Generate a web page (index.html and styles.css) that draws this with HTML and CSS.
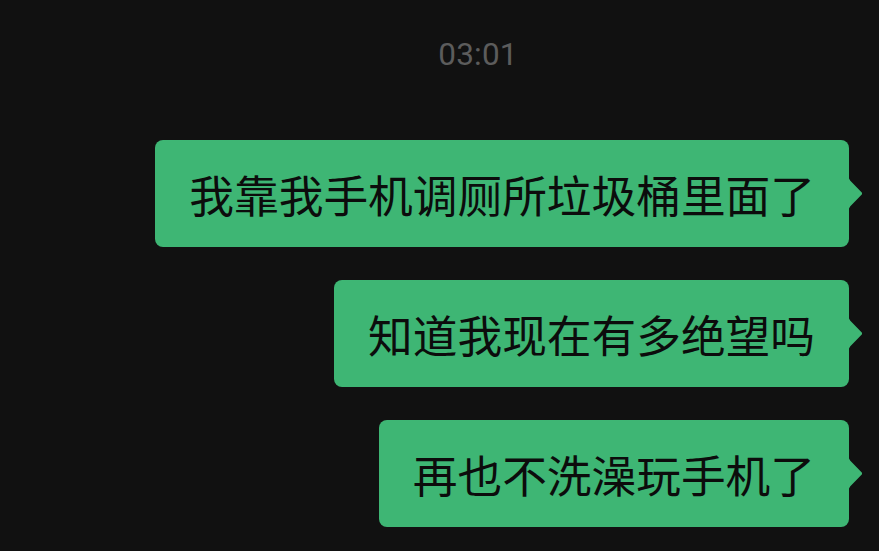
FILE: index.html
```html
<!DOCTYPE html>
<html lang="zh-CN">
<head>
<meta charset="utf-8">
<title>聊天</title>
<link rel="stylesheet" href="styles.css">
</head>
<body>
<main class="chat">
  <div class="time">03:01</div>
  <div class="messages">
    <div class="bubble">我靠我手机调厕所垃圾桶里面了</div>
    <div class="bubble">知道我现在有多绝望吗</div>
    <div class="bubble">再也不洗澡玩手机了</div>
  </div>
</main>
</body>
</html>
```
FILE: styles.css
```css
html, body {
  margin: 0;
  padding: 0;
  background: #111111;
  height: 100%;
  overflow: hidden;
}

.chat {
  display: flex;
  flex-direction: column;
  padding-top: 36px;
}

.time {
  align-self: center;
  margin-left: 77px;
  font-family: Roboto, "Noto Sans", sans-serif;
  font-size: 31.5px;
  line-height: 38px;
  color: #5c5c5c;
  letter-spacing: 0.2px;
}

.messages {
  display: flex;
  flex-direction: column;
  align-items: flex-end;
  gap: 33px;
  padding-right: 30px;
  margin-top: 66px;
}

.bubble {
  position: relative;
  background: #3eb674;
  color: #0c0c0c;
  border-radius: 8px;
  font-family: "Noto Sans CJK SC", "Noto Sans", sans-serif;
  font-size: 44.7px;
  line-height: 45px;
  height: 107px;
  box-sizing: border-box;
  padding: 0 34px;
  display: flex;
  align-items: center;
  white-space: nowrap;
}

/* tail pointing at the sender avatar side */
.bubble::after {
  content: "";
  position: absolute;
  right: -13px;
  top: 50%;
  width: 14px;
  height: 34px;
  margin-top: -17px;
  background: #3eb674;
  clip-path: polygon(0 0, 15% 12%, 100% 48%, 100% 52%, 15% 88%, 0 100%);
}
```
